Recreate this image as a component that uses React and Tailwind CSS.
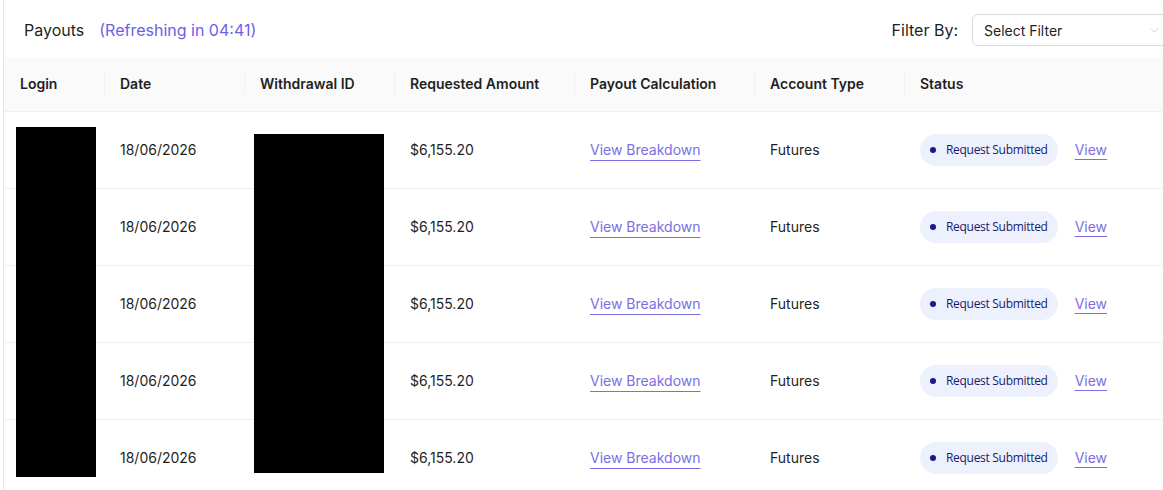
import React from 'react';
import { ChevronDown } from 'lucide-react';

const columns = [
  'Login',
  'Date',
  'Withdrawal ID',
  'Requested Amount',
  'Payout Calculation',
  'Account Type',
  'Status',
];

const payouts = Array.from({ length: 5 }, (_, i) => ({
  id: i,
  date: '18/06/2026',
  amount: '$6,155.20',
  accountType: 'Futures',
  status: 'Request Submitted',
}));

const gridCols = 'grid grid-cols-[100px_140px_150px_180px_180px_150px_1fr]';

function StatusBadge({ label }) {
  return (
    <span className="inline-flex items-center gap-[10px] h-8 pl-[10px] pr-[10px] rounded-full bg-[#edf1fd] text-[12px] text-[#1c1a6b] font-['Open_Sans',sans-serif] tracking-[-0.3px] mt-[2px]">
      <span className="w-[6px] h-[6px] rounded-full bg-[#1a188a]" />
      {label}
    </span>
  );
}

export default function App() {
  return (
    <div className="relative w-[1163px] h-[490px] overflow-hidden bg-white font-['Inter',sans-serif] text-[#1f1f1f]">
      <div className="ml-[3px] border-l border-[#e5e5e5] h-full">
        {/* toolbar */}
        <div className="flex items-center justify-between h-[57px] pl-[20px] pt-[3px]">
          <div className="flex items-center gap-[15px] text-[16px]">
            <span>Payouts</span>
            <span className="text-[#6c5fe6]">(Refreshing in 04:41)</span>
          </div>
          <div className="flex items-center gap-[14px] mr-[-40px]">
            <span className="text-[16px]">Filter By:</span>
            <div className="flex items-center justify-between w-[231px] h-[32px] pl-[11px] pr-[41px] border border-[#d9d9d9] rounded-[6px] text-[14px]">
              <span>Select Filter</span>
              <ChevronDown className="w-[13px] h-[13px] text-[#c4c4c4]" strokeWidth={1.5} />
            </div>
          </div>
        </div>

        {/* table head */}
        <div className={`${gridCols} h-[55px] pb-[2px] bg-[#fafafa] border-b border-[#f0f0f0] text-[14px] font-semibold`}>
          {columns.map((col, i) => (
            <div key={col} className="relative flex items-center px-4">
              {i > 0 && (
                <span className="absolute left-0 top-1/2 -translate-y-1/2 w-px h-[24px] bg-[#f0f0f0]" />
              )}
              {col}
            </div>
          ))}
        </div>

        {/* rows */}
        {payouts.map((p) => (
          <div key={p.id} className={`${gridCols} h-[77px] pb-[2px] border-b border-[#f0f0f0] text-[14px]`}>
            <div className="px-4" />
            <div className="flex items-center px-4">{p.date}</div>
            <div className="px-4" />
            <div className="flex items-center px-4">{p.amount}</div>
            <div className="flex items-center px-4">
              <a className="text-[#7b6fe2] underline underline-offset-[5px] decoration-[#7b6fe2]">View Breakdown</a>
            </div>
            <div className="flex items-center px-4">{p.accountType}</div>
            <div className="flex items-center gap-[17px] px-4">
              <StatusBadge label={p.status} />
              <a className="text-[#7b6fe2] underline underline-offset-[4px]">View</a>
            </div>
          </div>
        ))}
      </div>

      {/* redacted login / withdrawal ids */}
      <div className="absolute left-[16px] top-[127px] w-[80px] h-[350px] bg-black" />
      <div className="absolute left-[254px] top-[134px] w-[130px] h-[339px] bg-black" />
    </div>
  );
}
